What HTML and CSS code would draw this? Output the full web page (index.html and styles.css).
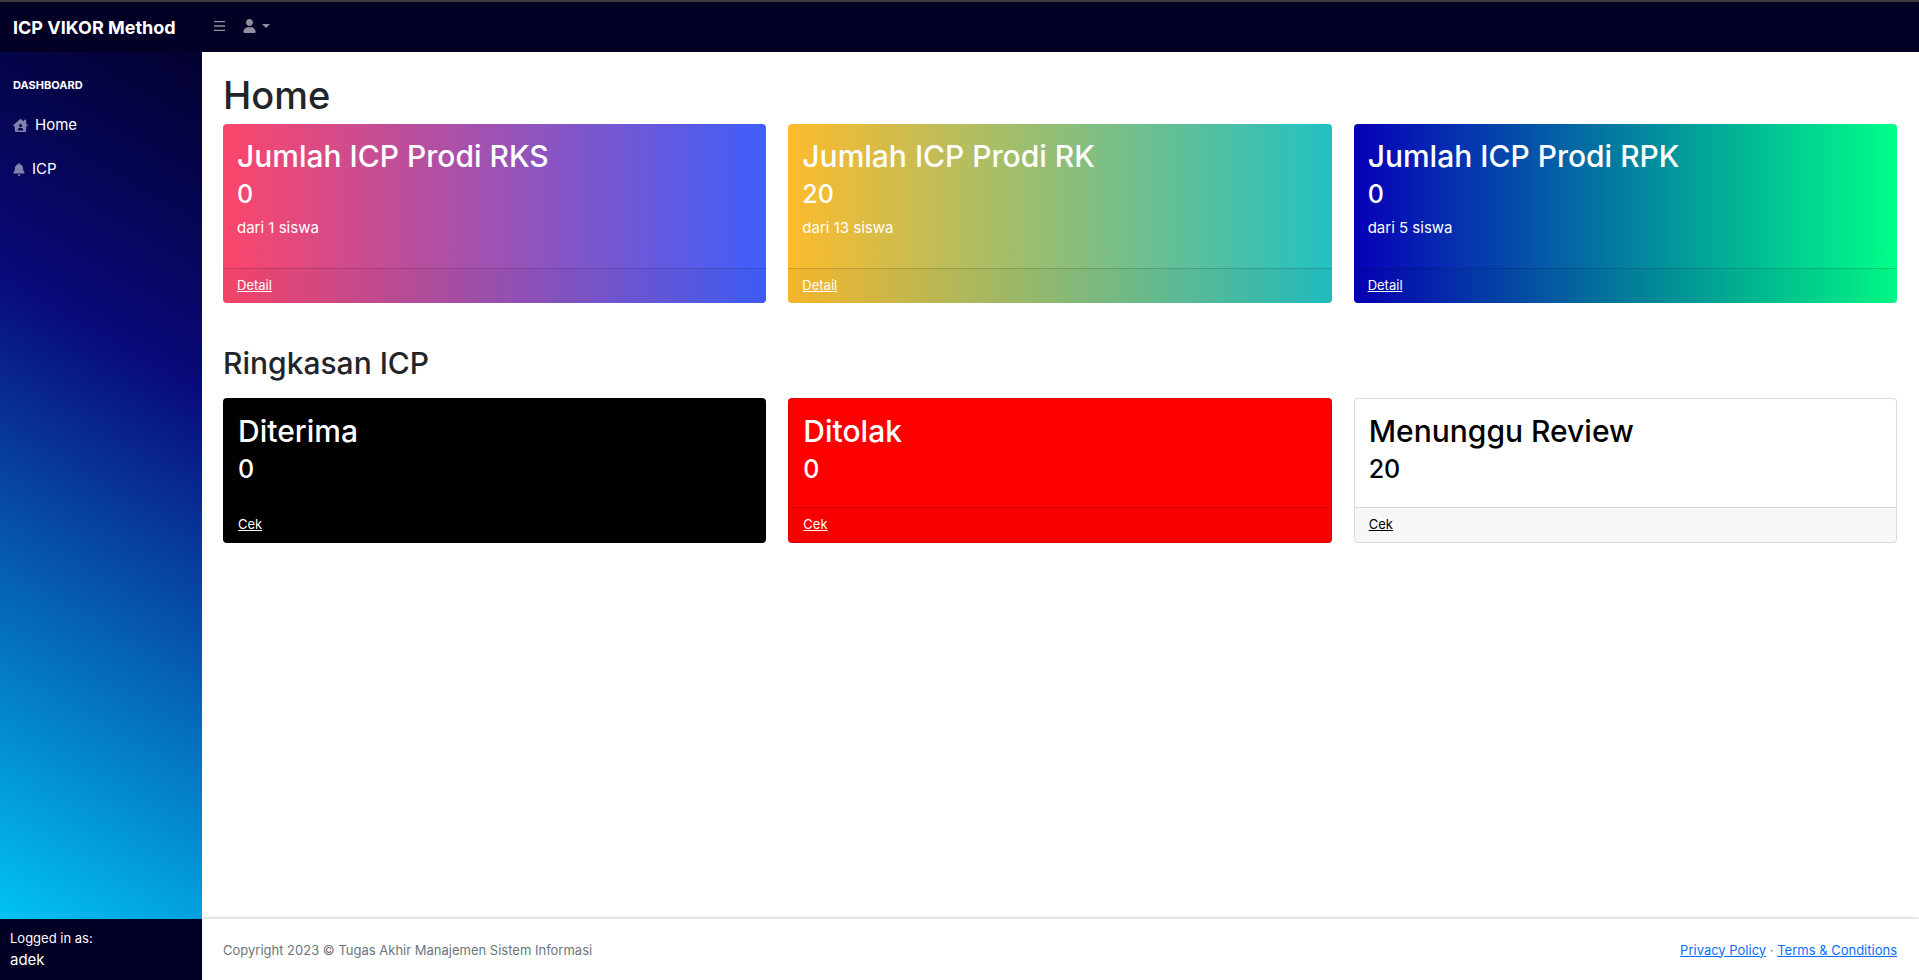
FILE: index.html
```html
<!DOCTYPE html>
<html lang="id">
<head>
<meta charset="utf-8">
<meta name="viewport" content="width=device-width, initial-scale=1">
<title>ICP VIKOR Method</title>
<link rel="stylesheet" href="styles.css">
</head>
<body>
<header class="topbar">
  <a class="brand" href="#">ICP VIKOR Method</a>
  <button class="icon-button" type="button" aria-label="Toggle sidebar">
    <svg class="icon-bars" viewBox="0 0 11 10" aria-hidden="true"><path d="M0 0h11v1.300H0zM0 4.300h11v1.400H0zM0 8.700h11V10H0z"/></svg>
  </button>
  <button class="icon-button user-button" type="button" aria-label="User menu">
    <svg class="icon-user" viewBox="0 0 448 512" aria-hidden="true"><path d="M224 256c70.700 0 128-57.300 128-128S294.700 0 224 0 96 57.300 96 128s57.300 128 128 128zm50.700 48H173.300C77.600 304 0 381.600 0 477.300 0 496.500 15.500 512 34.700 512h378.700c19.100 0 34.600-15.500 34.600-34.700C448 381.600 370.400 304 274.700 304z"/></svg>
    <span class="caret"></span>
  </button>
</header>
<div class="shell">
  <aside class="sidebar">
    <nav class="side-nav">
      <h2 class="side-heading">Dashboard</h2>
      <a class="side-link" href="#">
        <svg class="icon-home" viewBox="0 0 576 512" aria-hidden="true"><path fill-rule="evenodd" d="M575.800 255.500c0 18-15 32.100-32 32.100h-32l.7 160.200c.2 35.500-28.500 64.300-64 64.300H128.100c-35.300 0-64-28.700-64-64V287.600H32c-18 0-32-14-32-32.100 0-9 3-17 10-24L266.400 8c7-7 15-8 22-8s15 2 21 7L416 100.700V64c0-17.700 14.300-32 32-32h32c17.700 0 32 14.300 32 32v121l52.800 46.400c8 7 12 15 11 24.100zM288 320a64 64 0 1 0 0-128 64 64 0 1 0 0 128zm-32 32c-44.200 0-80 35.800-80 80 0 8.800 7.200 16 16 16h192c8.800 0 16-7.200 16-16 0-44.200-35.800-80-80-80h-64z"/></svg>
        <span>Home</span>
      </a>
      <a class="side-link" href="#">
        <svg class="icon-bell" viewBox="0 0 448 512" aria-hidden="true"><path d="M224 0c-17.700 0-32 14.300-32 32v19.200C119 66 64 130.600 64 208v18.800c0 47-17.300 92.400-48.500 127.600l-7.400 8.300c-8.400 9.400-10.400 22.900-5.300 34.400S19.400 416 32 416h384c12.600 0 24-7.400 29.200-18.900s3.100-25-5.300-34.400l-7.400-8.300C401.300 319.200 384 273.900 384 226.800V208c0-77.400-55-142-128-156.800V32c0-17.700-14.300-32-32-32zm45.300 493.300c12-12 18.700-28.300 18.700-45.300H160c0 17 6.700 33.300 18.700 45.300S207 512 224 512s33.300-6.700 45.300-18.700z"/></svg>
        <span>ICP</span>
      </a>
    </nav>
    <div class="side-footer">
      <div class="small">Logged in as:</div>
      <div>adek</div>
    </div>
  </aside>
  <div class="content">
    <main class="main">
      <h1 class="page-title">Home</h1>
      <section class="cards">
        <article class="card gradient-pink">
          <div class="card-body tall"><h2>Jumlah ICP Prodi RKS</h2><h3>0</h3><p>dari 1 siswa</p></div>
          <div class="card-footer"><a href="#">Detail</a></div>
        </article>
        <article class="card gradient-gold">
          <div class="card-body tall"><h2>Jumlah ICP Prodi RK</h2><h3>20</h3><p>dari 13 siswa</p></div>
          <div class="card-footer"><a href="#">Detail</a></div>
        </article>
        <article class="card gradient-green">
          <div class="card-body tall"><h2>Jumlah ICP Prodi RPK</h2><h3>0</h3><p>dari 5 siswa</p></div>
          <div class="card-footer"><a href="#">Detail</a></div>
        </article>
      </section>
      <h2 class="section-title">Ringkasan ICP</h2>
      <section class="cards">
        <article class="card bordered black">
          <div class="card-body"><h2>Diterima</h2><h3>0</h3></div>
          <div class="card-footer"><a href="#">Cek</a></div>
        </article>
        <article class="card bordered red">
          <div class="card-body"><h2>Ditolak</h2><h3>0</h3></div>
          <div class="card-footer"><a href="#">Cek</a></div>
        </article>
        <article class="card bordered white">
          <div class="card-body"><h2>Menunggu Review</h2><h3>20</h3></div>
          <div class="card-footer"><a href="#">Cek</a></div>
        </article>
      </section>
    </main>
    <footer class="footer">
      <div>Copyright 2023 © Tugas Akhir Manajemen Sistem Informasi</div>
      <div class="footer-links"><a href="#">Privacy Policy</a> · <a href="#">Terms &amp; Conditions</a></div>
    </footer>
  </div>
</div>
</body>
</html>
```
FILE: styles.css
```css
* { box-sizing: border-box; }
body {
  margin: 0;
  min-height: 100vh;
  display: flex;
  flex-direction: column;
  font-family: Inter, "Open Sans", sans-serif;
  font-size: 15px;
  line-height: 22px;
  color: #212529;
  background: #fff;
}
h1, h2, h3, p { margin: 0; font-weight: 500; }
.topbar {
  display: flex;
  align-items: center;
  height: 52px;
  border-top: 2px solid #403d3c;
  background: #020024;
  position: relative;
}
.brand {
  width: 202px;
  padding: 2px 0 0 13px;
  font-size: 18px;
  font-weight: 700;
  color: #fff;
  text-decoration: none;
  white-space: nowrap;
}
.icon-button {
  display: flex;
  align-items: center;
  gap: 6px;
  padding: 0 0 2px;
  margin-left: 12px;
  border: 0;
  background: none;
  color: #918fa0;
}
.user-button { margin-left: 18px; }
.icon-button svg, .side-link svg { display: block; fill: currentColor; }
.icon-bars { width: 11px; height: 10px; }
.icon-user { width: 13px; height: 14px; }
.caret {
  border: 4px solid transparent;
  border-top-color: currentColor;
  border-bottom: 0;
}
.shell { display: flex; flex: 1; }
.sidebar {
  flex: 0 0 202px;
  display: flex;
  flex-direction: column;
  margin-top: -50px;
  padding-top: 50px;
  background: linear-gradient(210deg, #020024 0%, #090979 35%, #00d4ff 100%);
}
.side-nav { flex: 1; }
.side-heading {
  padding: 25px 13px 10px;
  font-size: 11px;
  line-height: 16px;
  font-weight: 700;
  text-transform: uppercase;
  color: #fff;
}
.side-link {
  display: flex;
  align-items: center;
  gap: 7px;
  height: 44px;
  padding: 0 13px;
  color: #fff;
  text-decoration: none;
}
.side-link svg { color: #8381ad; }
.icon-home { width: 15px; height: 13px; }
.icon-bell { width: 12px; height: 13px; }
.side-footer {
  height: 61px;
  padding: 9px 10px;
  background: #020024;
  color: #fff;
  line-height: 21px;
}
.small { font-size: 13px; }
.content {
  flex: 1;
  min-width: 0;
  display: flex;
  flex-direction: column;
}
.main { flex: 1; padding: 22px 22px 0 21px; }
.page-title { margin-bottom: 7px; font-size: 38px; line-height: 43px; }
.cards {
  display: grid;
  grid-template-columns: repeat(3, minmax(0, 1fr));
  gap: 22px;
}
.card {
  display: flex;
  flex-direction: column;
  overflow: hidden;
  border-radius: 4px;
  color: #fff;
}
.card-body { flex: 1; min-height: 108px; padding: 15px 14px 14px; }
.card-body.tall { min-height: 144px; }
.card h2 { margin-bottom: 6px; font-size: 30px; line-height: 34px; }
.card h3 { margin-bottom: 8px; font-size: 25px; line-height: 30px; }
.card p { font-weight: 400; }
.card-footer {
  padding: 6px 14px 8px;
  border-top: 1px solid rgba(0, 0, 0, .14);
  background: rgba(0, 0, 0, .03);
  font-size: 13px;
  line-height: 20px;
}
.card-footer a { color: inherit; }
.gradient-pink { background: linear-gradient(90deg, #fc466b, #3f5efb); }
.gradient-gold { background: linear-gradient(90deg, #fdbb2d, #22c1c3); }
.gradient-green { background: linear-gradient(90deg, #0700b8, #00ff88); }
.bordered { border: 1px solid rgba(0, 0, 0, .14); }
.black { background: #000; }
.red { background: #f00; }
.white { background: #fff; color: #000; }
.section-title { margin: 43px 0 18px; font-size: 30px; line-height: 34px; }
.footer {
  display: flex;
  align-items: center;
  justify-content: space-between;
  height: 61px;
  padding: 0 22px 0 21px;
  font-size: 13px;
  color: #6c757d;
  box-shadow: 0 -1px 3px rgba(0, 0, 0, .2);
}
.footer a { color: #0d6efd; }
```
